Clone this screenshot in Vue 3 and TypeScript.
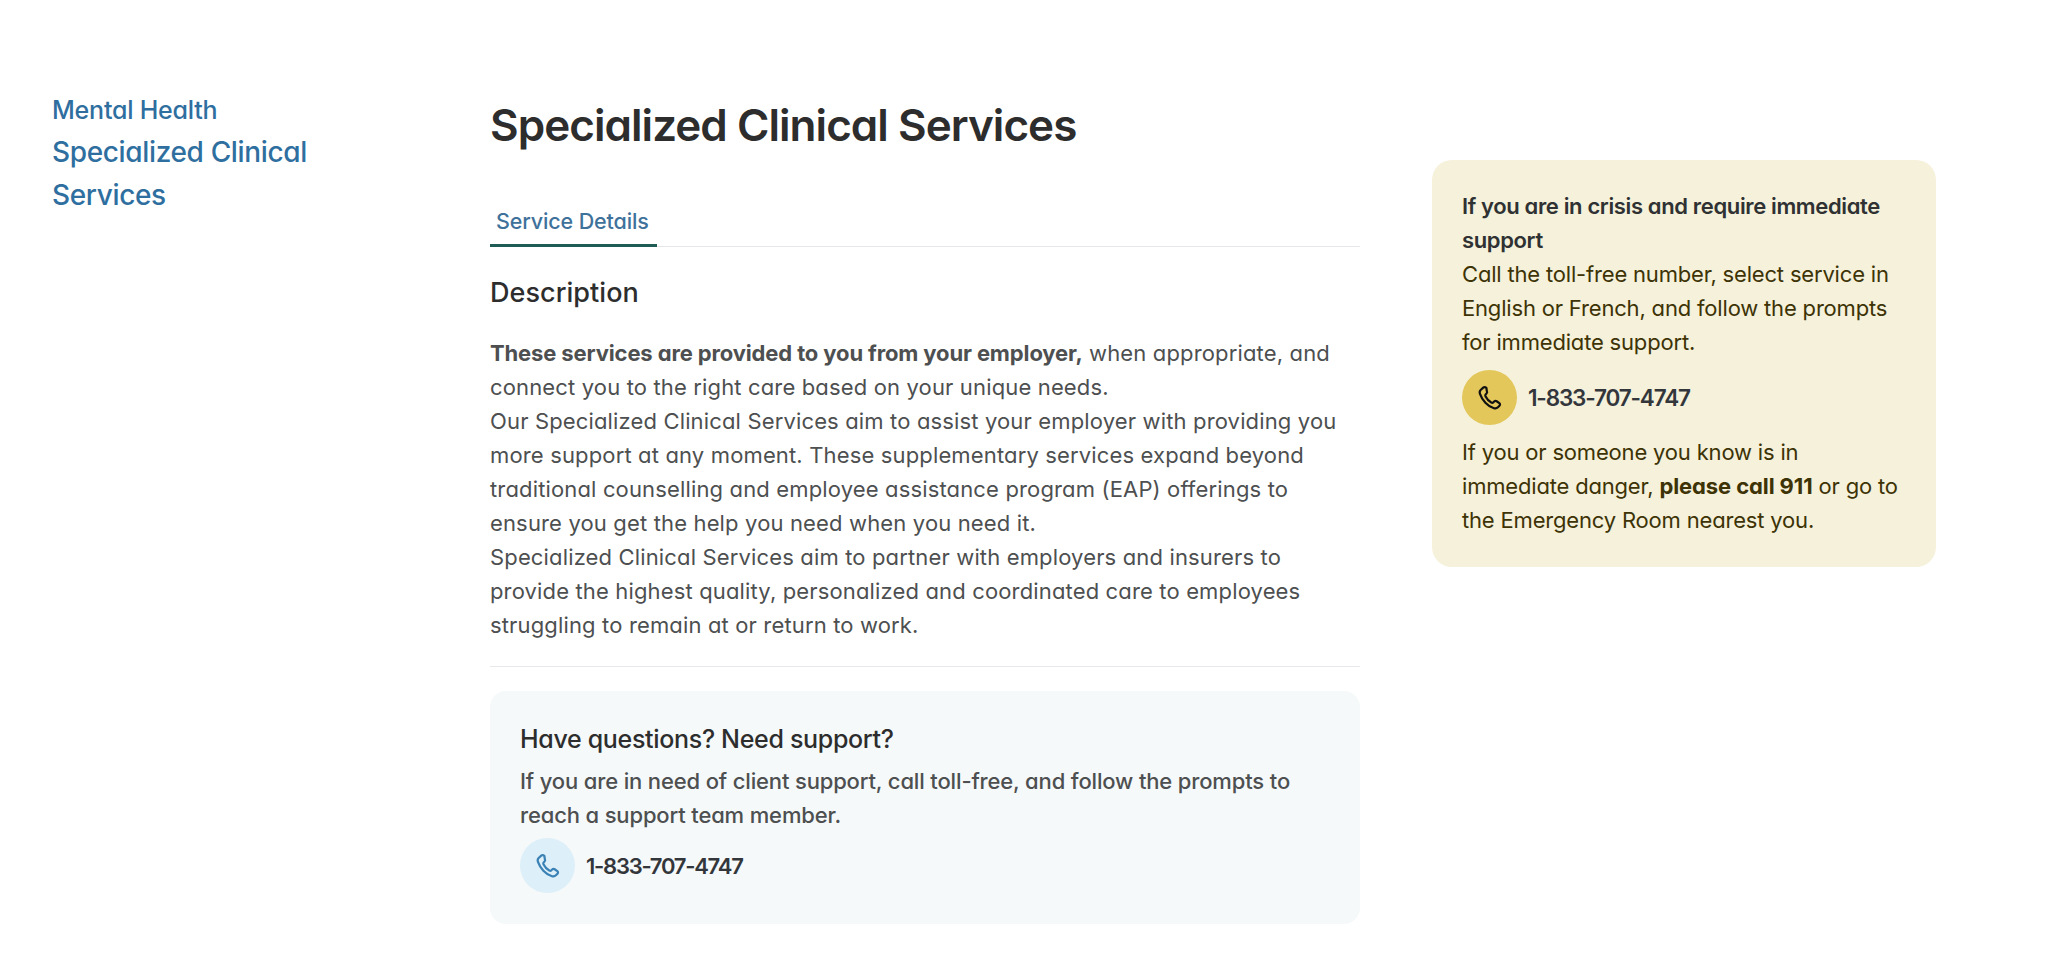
<script setup lang="ts">
const phoneLines: string = "1-833-707-4747";
const iconPath: string = "M6.2 3.1 4 5.1c-1 .9-1 2.2-.6 3.4 1.8 5.3 6.6 10.600 12 12.300 1.300.4 2.500.1 3.400-.8l1.300-1.300c.7-.7.6-1.700-.1-2.300l-2.300-1.600c-.7-.5-1.500-.4-2.100.2l-.7.7c-.5.5-1.200.5-1.800.2-2.100-1.200-3.900-3.200-5-5.400-.3-.6-.2-1.200.3-1.700l.6-.6c.6-.6.7-1.400.3-2.100L8.900 3.400c-.6-.9-1.900-1-2.700-.3Z";
</script>

<template>
  <div class="page">
    <nav class="side">
      <a class="crumb">Mental Health</a>
      <a class="current">Specialized Clinical<br />Services</a>
    </nav>

    <main class="main">
      <h1 class="title">Specialized Clinical Services</h1>
      <div class="tabs"><span class="tab">Service Details</span></div>
      <h2 class="section">Description</h2>
      <p class="copy">
        <strong>These services are provided to you from your employer,</strong> when appropriate, and<br />
        connect you to the right care based on your unique needs.<br />
        Our Specialized Clinical Services aim to assist your employer with providing you<br />
        more support at any moment. These supplementary services expand beyond<br />
        traditional counselling and employee assistance program (EAP) offerings to<br />
        ensure you get the help you need when you need it.<br />
        Specialized Clinical Services aim to partner with employers and insurers to<br />
        provide the highest quality, personalized and coordinated care to employees<br />
        struggling to remain at or return to work.
      </p>
      <section class="help">
        <h3 class="help-title">Have questions? Need support?</h3>
        <p class="help-copy">If you are in need of client support, call toll-free, and follow the prompts to<br />reach a support team member.</p>
        <div class="phone">
          <span class="circle blue">
            <svg viewBox="0 0 24 24" class="icon"><path :d="iconPath" /></svg>
          </span>
          <span class="number">{{ phoneLines }}</span>
        </div>
      </section>
    </main>

    <aside class="crisis">
      <p class="crisis-title">If you are in crisis and require immediate<br />support</p>
      <p class="crisis-copy">Call the toll-free number, select service in<br />English or French, and follow the prompts<br />for immediate support.</p>
      <div class="phone crisis-phone">
        <span class="circle gold">
          <svg viewBox="0 0 24 24" class="icon"><path :d="iconPath" /></svg>
        </span>
        <span class="number">{{ phoneLines }}</span>
      </div>
      <p class="crisis-copy">If you or someone you know is in<br />immediate danger, <strong>please call 911</strong> or go to<br />the Emergency Room nearest you.</p>
    </aside>
  </div>
</template>

<style>
html, body { background: #fff; }
</style>

<style scoped>
.page {
  display: flex;
  align-items: flex-start;
  padding: 89px 114px 52px 52px;
  font-family: Inter, "Noto Sans", sans-serif;
  font-feature-settings: "cv11" 1;
  color: #4d4f50;
}
.side { width: 438px; flex: none; margin-top: 1px; display: flex; flex-direction: column; color: #2f6f9f; font-weight: 500; }
.crumb { font-size: 25px; line-height: 41px; letter-spacing: -0.22px; }
.current { font-size: 28px; line-height: 43px; letter-spacing: -0.35px; }
.main { width: 870px; flex: none; }
.title { margin: 7px 0 0; font-size: 44px; line-height: 58px; font-weight: 600; color: #2d2d2d; letter-spacing: -0.95px; }
.tabs { margin-top: 45px; border-bottom: 1px solid #e6e7ea; display: flex; }
.tab { padding: 0 8px 0 6px; line-height: 45px; font-size: 21.500px; color: #3f729b; font-weight: 500; border-bottom: 3px solid #1f5c56; margin-bottom: -1px; letter-spacing: -0.13px; }
.section { margin: 26px 0 0; font-size: 27px; line-height: 40px; font-weight: 500; color: #2d2d2d; letter-spacing: 0.05px; }
.copy { margin: 23px 0 0; font-size: 22px; line-height: 34px; padding-bottom: 24px; border-bottom: 1px solid #e8e8ec; letter-spacing: 0.15px; }
.copy strong { font-weight: 700; letter-spacing: -0.13px; }
.help { margin-top: 24px; background: #f5f9fa; border-radius: 16px; padding: 30px 30px 31px; }
.help-title { margin: 0; font-size: 25px; line-height: 36px; font-weight: 500; color: #2d2d2d; letter-spacing: -0.32px; }
.help-copy { margin: 7px 0 0; font-size: 22px; line-height: 34px; font-weight: 500; letter-spacing: -0.15px; }
.phone { display: flex; align-items: center; gap: 11px; margin-top: 6px; }
.circle { width: 55px; height: 55px; border-radius: 50%; display: flex; align-items: center; justify-content: center; flex: none; }
.blue { background: #ddeff9; color: #3a82b5; }
.gold { background: #e3c75a; color: #111; }
.icon { width: 28px; height: 28px; fill: none; stroke: currentColor; stroke-width: 1.900; stroke-linejoin: round; }
.number { font-size: 22px; font-weight: 600; color: #33363a; letter-spacing: -1.24px; }
.crisis { width: 504px; flex: none; margin-left: 72px; margin-top: 71px; box-sizing: border-box; padding: 29px 30px 30px 30px; background: #f5f1da; border-radius: 20px; color: #3d3306; font-size: 22px; line-height: 34px; letter-spacing: -0.18px; }
.crisis p { margin: 0; }
.crisis .crisis-title { font-weight: 600; color: #2f3133; letter-spacing: -0.36px; }
.crisis strong { letter-spacing: -0.1px; }
.crisis-phone { margin: 11px 0 10px; }
.crisis-phone .number { font-size: 22.500px; letter-spacing: -1.15px; }
</style>
